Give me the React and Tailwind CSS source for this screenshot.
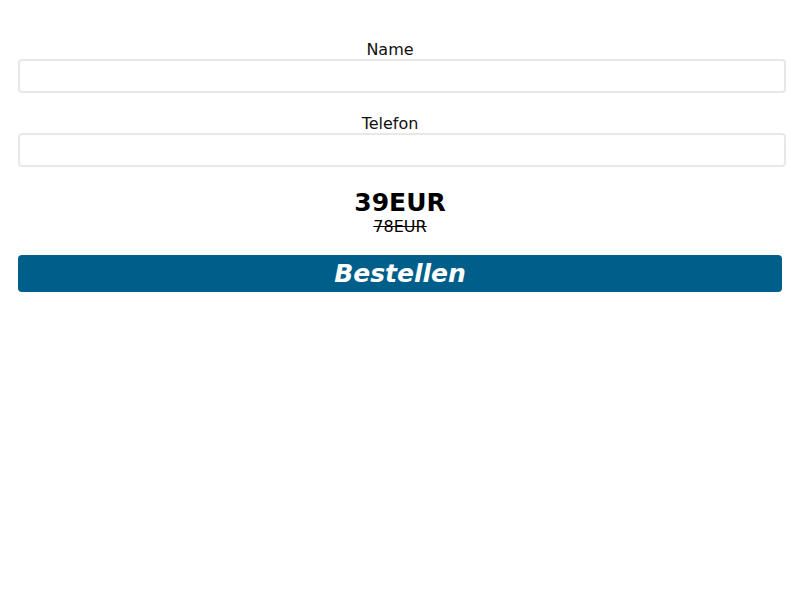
export default function App() {
  return (
    <div className="w-[800px] h-[600px] bg-white text-black" style={{ fontFamily: '"DejaVu Sans", sans-serif' }}>
      <div className="pt-[40px]">
        <div className="w-[780px] text-center text-[16px] leading-[19px] text-[#111]">Name</div>
        <input className="block ml-[18px] w-[768px] h-[34px] border-2 border-[#e8e8e8] rounded-[4px] outline-none" />
        <div className="w-[780px] text-center text-[16px] leading-[19px] mt-[21px] text-[#111]">Telefon</div>
        <input className="block ml-[18px] w-[768px] h-[34px] border-2 border-[#e8e8e8] rounded-[4px] outline-none" />
        <div className="mt-[21px] text-center text-[25px] font-bold leading-[30px]">39EUR</div>
        <div className="text-center text-[16px] leading-[18px] line-through">78EUR</div>
        <button className="block mt-[19px] ml-[18px] w-[764px] h-[37px] rounded-[4px] bg-[#005f8a] text-white text-[25px] font-bold italic leading-[37px] text-center">
          Bestellen
        </button>
      </div>
    </div>
  );
}
